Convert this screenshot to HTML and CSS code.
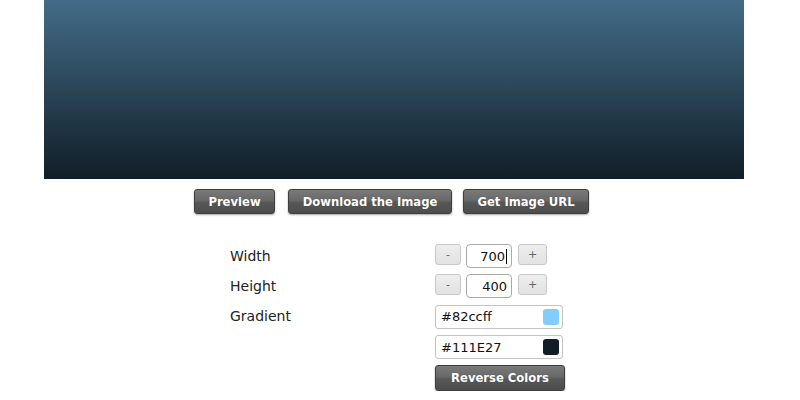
FILE: index.html
```html
<!DOCTYPE html>
<html>
<head>
<meta charset="utf-8">
<link rel="stylesheet" href="styles.css">
</head>
<body>
<div class="banner"></div>
<div class="actions">
  <button class="dark btn-preview">Preview</button>
  <button class="dark btn-download">Download the Image</button>
  <button class="dark btn-url">Get Image URL</button>
</div>
<div class="form">
  <div class="label">Width</div>
  <div class="ctrl">
    <span class="step minus">-</span>
    <span class="num">700<span class="caret"></span></span>
    <span class="step plus">+</span>
  </div>
  <div class="label">Height</div>
  <div class="ctrl">
    <span class="step minus">-</span>
    <span class="num">400</span>
    <span class="step plus">+</span>
  </div>
  <div class="label">Gradient</div>
  <div class="ctrl">
    <span class="color">#82ccff<span class="swatch sw1"></span></span>
  </div>
  <div class="label"></div>
  <div class="ctrl">
    <span class="color">#111E27<span class="swatch sw2"></span></span>
  </div>
  <div class="label"></div>
  <div class="ctrl">
    <button class="dark btn-reverse">Reverse Colors</button>
  </div>
</div>
</body>
</html>
```
FILE: styles.css
```css
html, body {
  margin: 0;
  padding: 0;
  background: #fff;
  font-family: "DejaVu Sans", Verdana, sans-serif;
}
.banner {
  margin-left: 44px;
  width: 700px;
  height: 179px;
  background: linear-gradient(to bottom, #82ccff, #111e27);
  background-size: 700px 400px;
  background-position: left bottom;
}
.actions {
  display: flex;
  padding-left: 194px;
  margin-top: 10px;
}
.dark {
  height: 25px;
  border: 1px solid #3e3e3e;
  border-radius: 3px;
  background: linear-gradient(to bottom, #7a7a7a 0%, #686868 45%, #575757 55%, #4d4d4d 100%);
  color: #fff;
  font-family: "DejaVu Sans", Verdana, sans-serif;
  font-weight: bold;
  font-size: 11.6px;
  padding: 0;
  box-shadow: 0 1px 2px rgba(0,0,0,0.35);
  text-shadow: 0 0 1px rgba(0,0,0,0.3);
}
.btn-preview { width: 81px; }
.btn-download { width: 164px; margin-left: 13px; }
.btn-url { width: 126px; margin-left: 11px; }
.form {
  display: grid;
  grid-template-columns: 205px auto;
  grid-template-rows: 24px 24px 25px 24px 26px;
  row-gap: 6px;
  margin-left: 230px;
  margin-top: 30px;
}
.label {
  font-size: 14px;
  color: #222;
  line-height: 24px;
  font-family: "DejaVu Sans", sans-serif;
}
.ctrl {
  display: flex;
  align-items: center;
}
.step {
  height: 19px;
  border: 1px solid #c8c8c8;
  border-radius: 3px;
  background: linear-gradient(to bottom, #eee, #e2e2e2);
  color: #666;
  font-size: 11px;
  display: flex;
  align-items: center;
  justify-content: center;
  margin-bottom: 3px;
}
.minus { width: 24px; }
.plus { width: 27px; margin-left: 6px; }
.num {
  width: 40px;
  height: 22px;
  margin-left: 5px;
  padding-right: 4px;
  border: 1px solid #aaa;
  border-radius: 4px;
  box-sizing: content-box;
  font-size: 13px;
  color: #111;
  display: flex;
  align-items: center;
  justify-content: flex-end;
}
.caret {
  display: inline-block;
  width: 1px;
  height: 15px;
  background: #000;
  margin-left: 1px;
}
.color {
  width: 118px;
  height: 22px;
  padding-left: 5px;
  padding-right: 3px;
  border: 1px solid #c4c4c4;
  border-radius: 3px;
  font-size: 13px;
  color: #111;
  display: flex;
  align-items: center;
  justify-content: space-between;
  box-sizing: content-box;
}
.swatch {
  width: 16px;
  height: 16px;
  border-radius: 3px;
}
.sw1 { background: #82ccff; }
.sw2 { background: #111e27; }
.btn-reverse {
  width: 130px;
  height: 26px;
}
```
